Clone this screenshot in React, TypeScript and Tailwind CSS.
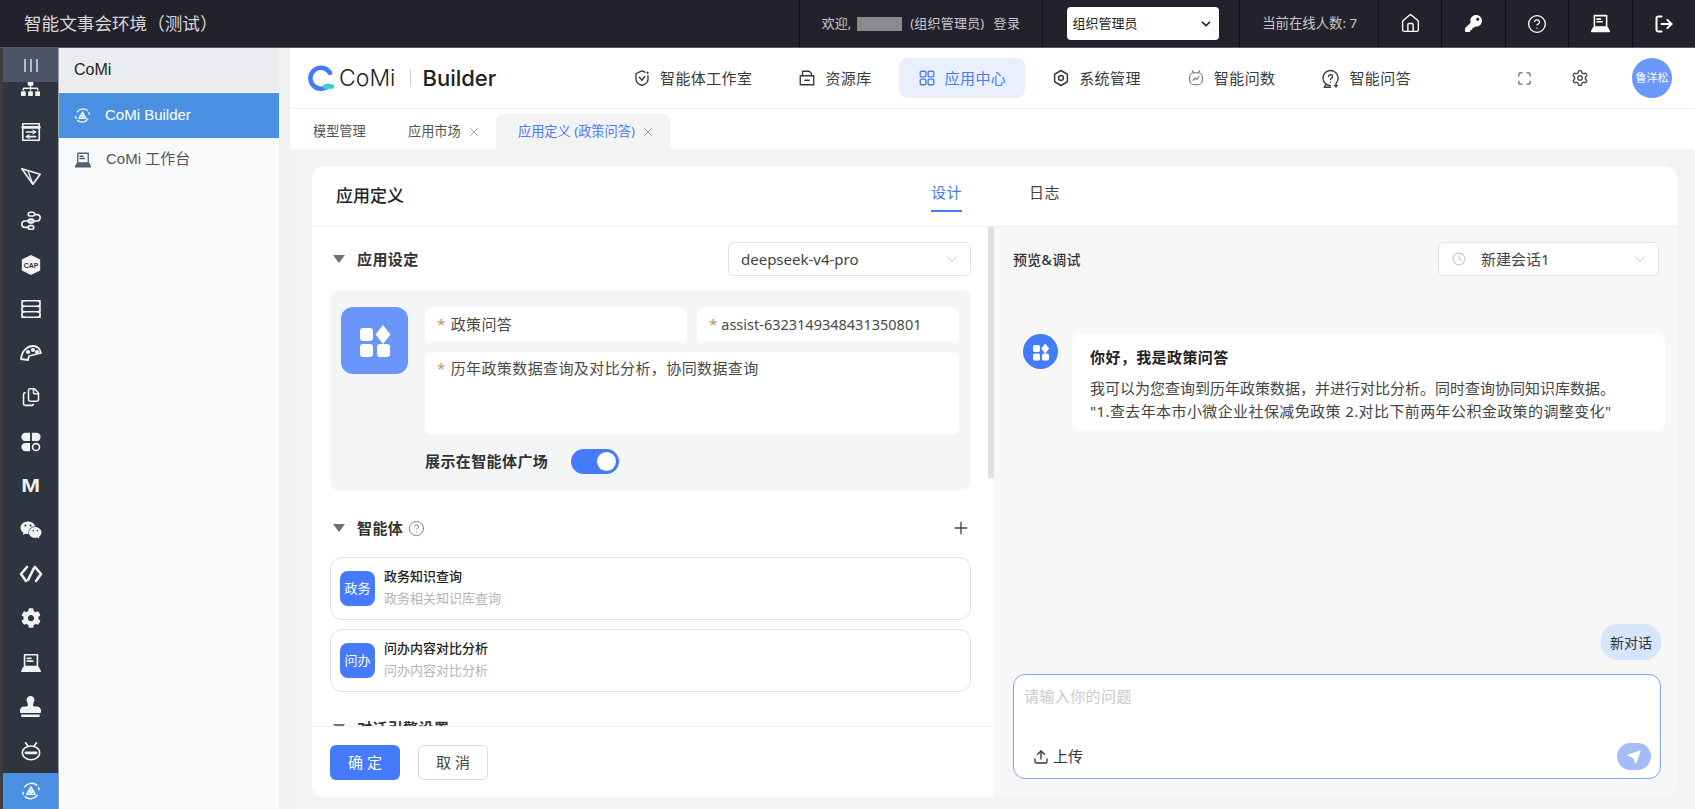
import { ChevronDown, Clock, Maximize, Plus, Settings, Upload, X, House, CircleHelp, LogOut, Send, Files } from 'lucide-react';
import { FaSitemap, FaStamp, FaCog, FaWeixin, FaKey } from 'react-icons/fa';
import type { ReactNode } from 'react';

const cjk = { fontFamily: '"Noto Sans", "Noto Sans CJK SC", sans-serif' };

// small helper for the rail drawings
function Glyph({ size = 22, width = 1.8, children }: { size?: number; width?: number; children: ReactNode }) {
  return (
    <svg width={size} height={size} viewBox="0 0 24 24" fill="none" stroke="currentColor" strokeWidth={width} strokeLinecap="round" strokeLinejoin="round">
      {children}
    </svg>
  );
}

function LaptopIcon({ size = 22 }: { size?: number }) {
  return (
    <Glyph size={size}>
      <path d="M5 3h14v13H5z" />
      <path d="M8 7h4M8 10h6" />
      <path d="M4 17h16l2 4H2z" fill="currentColor" />
    </Glyph>
  );
}

function BuilderIcon({ size = 20 }: { size?: number }) {
  return (
    <Glyph size={size} width={1.7}>
      <path d="M4.5 7a10 10 0 0 1 14.5-2" />
      <path d="M19.5 17a10 10 0 0 1-14.5 2" />
      <path d="M2.2 13.5a10 10 0 0 0 .8 2.5" />
      <path d="M21.8 10.5a10 10 0 0 0-.8-2.5" />
      <path d="M12 7l5 9H7z" />
      <circle cx="12" cy="13" r="1.6" />
    </Glyph>
  );
}

function AppGlyph({ size }: { size: number }) {
  return (
    <svg width={size} height={size} viewBox="0 0 34 34" fill="white">
      <rect x="2" y="4" width="13" height="13" rx="3" />
      <path d="M25 1l7.5 9.5L25 20l-7.5-9.5z" />
      <rect x="2" y="20" width="13" height="13" rx="3" />
      <rect x="19" y="20" width="13" height="13" rx="3" />
    </svg>
  );
}

const railIcons: ReactNode[] = [
  <FaSitemap size={19} />,
  <Glyph><rect x="3" y="3" width="18" height="18" /><path d="M3 7h18" strokeWidth="3" /><path d="M7 12h10M7 17h10" /><path d="M14 10l3 2-3 2M10 15l-3 2 3 2" strokeWidth="1.2" /></Glyph>,
  <Glyph><path d="M2 4l20 6-8 11z" /><path d="M14 21L9 7" strokeWidth="1.4" /></Glyph>,
  <Glyph><rect x="9" y="2.5" width="7" height="4" rx="2" /><path d="M16 5h2.5a3.5 3.5 0 0 1 0 7h-13a3.5 3.5 0 0 0 0 7H9" /><rect x="9" y="17" width="6" height="4" rx="2" /><rect x="9" y="10" width="6" height="4" rx="2" /></Glyph>,
  <svg width="22" height="22" viewBox="0 0 24 24"><path d="M12 1l10 5v12l-10 5-10-5V6z" fill="currentColor" /><text x="12" y="15" textAnchor="middle" fontSize="7.5" fontWeight="700" fill="#2f3441" fontFamily="Liberation Sans, sans-serif">CAP</text></svg>,
  <Glyph><path d="M2 3h20M2 9h20M2 15h20M2 21h20" /><path d="M5 3a3 3 0 0 0 0 6 3 3 0 0 0 0 6 3 3 0 0 0 0 6" /><path d="M19 3a3 3 0 0 1 0 6 3 3 0 0 1 0 6 3 3 0 0 1 0 6" /></Glyph>,
  <Glyph size={24}><path d="M2 18C3 9 9 5 14 5c4 0 7 3 8 7l-12 3-1 4z" /><circle cx="9" cy="11" r="1.2" fill="currentColor" /><circle cx="14" cy="9" r="1.2" fill="currentColor" /><circle cx="18" cy="11" r="1.2" fill="currentColor" /></Glyph>,
  <Files size={20} strokeWidth={1.9} />,
  <svg width="22" height="22" viewBox="0 0 24 24" fill="currentColor"><path d="M6 2h5v9H6a4.5 4.5 0 0 1 0-9zM13 2h5a4.5 4.5 0 0 1 0 9h-5zM6 13h5v9H6a4.5 4.5 0 0 1 0-9z" /><circle cx="17.5" cy="17.5" r="3.8" fill="none" stroke="currentColor" strokeWidth="1.8" /></svg>,
  <span className="text-[18px] leading-none font-black scale-x-125" style={{ fontFamily: '"Liberation Sans", sans-serif' }}>M</span>,
  <FaWeixin size={22} />,
  <Glyph size={24} width={2.6}><path d="M8 5l-6 7 5 7M16 5l6 7-5 7" /><path d="M15 6l-6 12" /></Glyph>,
  <FaCog size={20} />,
  <LaptopIcon />,
  <FaStamp size={21} />,
  <Glyph><path d="M6 3l3 4M18 3l-3 4" /><ellipse cx="12" cy="14" rx="9.5" ry="7.5" /><path d="M6.5 14h11" strokeWidth="3" /></Glyph>,
];

// top nav drawings, thin outlines like the reference
const navStudio = (
  <Glyph size={18}>
    <path d="M20 9v5c0 4-4 6.500-8 8-4-1.500-8-4-8-8V6l8-3.500 4 1.800" />
    <path d="M8.500 11l3.500 4 3.500-5" />
    <path d="M19.500 2.500l.7 1.800 1.800.7-1.800.7-.7 1.800-.7-1.800L17 5l1.800-.7z" fill="currentColor" stroke="none" />
  </Glyph>
);
const navRes = (
  <Glyph size={18}>
    <path d="M3 9h18v12H3z" />
    <path d="M6 9V3h9l3 3v3" />
    <path d="M9 15h6" />
  </Glyph>
);
const navApp = (
  <Glyph size={18}>
    <rect x="3" y="3" width="7.500" height="7.500" rx="1.500" />
    <rect x="13.500" y="3" width="7.500" height="7.500" rx="1.500" />
    <rect x="3" y="13.500" width="7.500" height="7.500" rx="1.500" />
    <rect x="13.500" y="13.500" width="7.500" height="7.500" rx="1.500" />
  </Glyph>
);
const navSys = (
  <Glyph size={18} width={2}>
    <path d="M12 2l8.500 5v10L12 22l-8.500-5V7z" />
    <circle cx="12" cy="12" r="3.200" />
  </Glyph>
);
const navData = (
  <span className="text-[#777]">
    <Glyph size={18} width={1.500}>
      <path d="M7 2l2 3M17 2l-2 3" />
      <rect x="3.500" y="5" width="17" height="16" rx="6" />
      <path d="M8 15l3-3 2 2 3-4" />
    </Glyph>
  </span>
);
const navAsk = (
  <Glyph size={19} width={1.700}>
    <path d="M12 21a9.500 9.500 0 1 1 7-3" />
    <path d="M9.500 9.500a2.500 2.500 0 1 1 3.500 2.300c-.7.400-1 .9-1 1.700" />
    <path d="M12 16.500v.1" />
    <path d="M19 19v4M17 21h4" />
    <path d="M6 20l-2 3h8" />
  </Glyph>
);

function NavItem({ icon, label, active }: { icon: ReactNode; label: string; active?: boolean }) {
  return (
    <div className={`flex items-center gap-[9px] h-10 px-[19px] rounded-lg text-[15px] tracking-[0.4px] ${active ? 'bg-[#e9effc] text-[#4a7cf6]' : 'text-[#3a3a3a]'}`}>
      {icon}
      <span>{label}</span>
    </div>
  );
}

function Field({ children, className }: { children: ReactNode; className: string }) {
  return (
    <div className={`bg-white rounded-md px-3 text-[15px] text-[#4a4a4a] tracking-[0.4px] ${className}`}>
      <span className="text-[#c29a62] mr-[5px]">*</span>
      {children}
    </div>
  );
}

function AgentCard({ badge, title, sub }: { badge: string; title: string; sub: string }) {
  return (
    <div className="h-[63px] rounded-xl border border-[#e2e2e6] bg-white flex items-center pl-[9px] gap-[9px]">
      <div className="w-[35px] h-[35px] rounded-lg bg-[#457bfa] text-white text-[13px] flex items-center justify-center shrink-0">{badge}</div>
      <div className="flex flex-col gap-[5px] pb-[3px]">
        <div className="text-[13px] leading-[17px] font-medium text-[#222]">{title}</div>
        <div className="text-[13px] leading-[17px] text-[#b5b5b5]">{sub}</div>
      </div>
    </div>
  );
}

function SectionTitle({ children }: { children: ReactNode }) {
  return (
    <div className="flex items-center gap-[12px] pl-[3px] text-[15px] font-bold text-[#333] tracking-[0.4px]">
      <span className="w-0 h-0 border-l-[6px] border-r-[6px] border-t-[8px] border-l-transparent border-r-transparent border-t-[#6e7079]" />
      {children}
    </div>
  );
}

export default function App() {
  return (
    <div className="w-[1695px] h-[809px] flex flex-col overflow-hidden bg-[#f3f3f3]" style={cjk}>
      {/* Top bar */}
      <header className="h-12 shrink-0 bg-[#23222c] border-b border-[#5b5b5f] flex items-center text-[#c9c9cc] text-[13px]">
        <div className="w-[800px] pl-6 text-[17.600px] text-[#d8d8d8]">智能文事会环境（测试）</div>
        <div className="w-[244px] h-full border-l border-[#111] flex items-center pl-[22px]">
          <span>欢迎,</span>
          <span className="w-[45px] h-[14px] bg-[#8a8a8d] ml-[6px] mr-[8px]" />
          <span className="tracking-[0.2px]">(组织管理员)</span>
          <span className="ml-[9px] tracking-[0.500px]">登录</span>
        </div>
        <div className="w-[197px] h-full border-l border-[#111] flex items-center pl-[24px]">
          <div className="w-[152px] h-[33px] bg-white rounded-sm flex items-center justify-between px-[5px] text-[#222]">
            组织管理员
            <ChevronDown size={14} strokeWidth={3} className="mr-[1px]" />
          </div>
        </div>
        <div className="w-[139px] h-full border-l border-[#111] flex items-center pl-[22px] text-[13.400px]">当前在线人数: 7</div>
        {[
          <House size={21} strokeWidth={1.6} />,
          <FaKey size={17} />,
          <CircleHelp size={20} strokeWidth={1.6} />,
          <LaptopIcon size={21} />,
          <LogOut size={20} strokeWidth={2.4} />,
        ].map((icon, i) => (
          <div key={i} className="w-[63.500px] h-full border-l border-[#111] flex items-center justify-center text-white">{icon}</div>
        ))}
      </header>

      <div className="flex-1 flex min-h-0">
        <div className="w-[3px] bg-[#3d3d40]" />
        {/* Rail */}
        <aside className="w-[55px] bg-[#2f3441] flex flex-col text-[#f2f2f2] overflow-hidden relative">
          <div className="h-[34px] shrink-0 bg-[#4c5568] flex items-center justify-center gap-[4px] relative z-10">
            <span className="w-[2px] h-[13px] bg-[#b9bcc4]" />
            <span className="w-[2px] h-[13px] bg-[#b9bcc4]" />
            <span className="w-[2px] h-[13px] bg-[#b9bcc4]" />
          </div>
          <div className="-mt-[16px]">
            {railIcons.map((icon, i) => (
              <div key={i} className="h-[44.200px] flex items-center justify-center">{icon}</div>
            ))}
          </div>
          <div className="absolute left-0 right-0 bottom-0 h-[36px] bg-[#4a90e2] flex items-center justify-center text-white">
            <BuilderIcon size={20} />
          </div>
        </aside>

        {/* Sidebar */}
        <aside className="w-[221px] bg-[#f7f9fb] text-[15px] border-l border-[#9aa0a8]">
          <div className="h-[44px] bg-[#ebecef] flex items-center pl-[15px] text-[16px] text-[#222]" style={{ fontFamily: '"Liberation Sans", sans-serif' }}>CoMi</div>
          <div className="h-[45px] mt-[1px] bg-[#4a90e2] text-white flex items-center pl-[15px] gap-[14px]">
            <BuilderIcon size={17} />
            <span style={{ fontFamily: '"Liberation Sans", "Noto Sans CJK SC", sans-serif' }}>CoMi Builder</span>
          </div>
          <div className="h-[43px] text-[#555] flex items-center pl-[15px] gap-[14px]">
            <span className="text-[#4f6175]"><LaptopIcon size={18} /></span>
            <span style={{ fontFamily: '"Liberation Sans", "Noto Sans CJK SC", sans-serif' }}>CoMi 工作台</span>
          </div>
        </aside>

        <div className="w-[11px] bg-[#f1f1f1]" />

        <main className="flex-1 flex flex-col min-w-0">
          {/* App header */}
          <div className="h-[61px] shrink-0 bg-white border-b border-[#efefef] flex items-center pl-[18px]">
            <div className="w-[306px] flex items-center">
              <svg width="26" height="26" viewBox="0 0 26 26" fill="none">
                <path d="M20 21A10.500 10.500 0 1 1 22 8" stroke="#457bfa" strokeWidth="4.500" strokeLinecap="round" />
                <path d="M17 21.500h7" stroke="#35d0c8" strokeWidth="4.500" strokeLinecap="round" />
              </svg>
              <span className="text-[23px] font-light text-[#1f1f1f] ml-[5px]" style={{ fontFamily: 'Inter, sans-serif' }}>CoMi</span>
              <span className="w-px h-[18px] bg-[#cfcfcf] ml-[15px]" />
              <span className="text-[22px] font-medium text-[#222] ml-[11px]" style={{ fontFamily: 'Inter, sans-serif' }}>Builder</span>
            </div>
            <div className="flex items-center gap-[8px]">
              <NavItem icon={navStudio} label="智能体工作室" />
              <NavItem icon={navRes} label="资源库" />
              <NavItem active icon={navApp} label="应用中心" />
              <NavItem icon={navSys} label="系统管理" />
              <NavItem icon={navData} label="智能问数" />
              <NavItem icon={navAsk} label="智能问答" />
            </div>
            <div className="flex-1" />
            <Maximize size={15} className="text-[#666] mr-[39px]" />
            <Settings size={18} className="text-[#555] mr-[43px]" />
            <div className="w-10 h-10 rounded-full bg-[#6a98fb] text-white text-[11px] flex items-center justify-center mr-[23px]">鲁洋松</div>
          </div>

          {/* Tabs */}
          <div className="h-[40px] shrink-0 bg-white flex items-end text-[13.200px] text-[#555]">
            <div className="h-[35px] flex items-center ml-[23px] w-[95px]">模型管理</div>
            <div className="h-[35px] flex items-center gap-[6px] w-[88px]">应用市场 <X size={14} strokeWidth={1.5} className="text-[#999]" /></div>
            <div className="h-[35px] w-[174px] bg-[#f3f3f3] rounded-t-lg text-[#4a7cf6] flex items-center pl-[22px] gap-[6px]">应用定义 (政策问答) <X size={14} strokeWidth={1.5} className="text-[#888]" /></div>
          </div>

          {/* Card */}
          <div className="flex-1 min-h-0 pt-[17px] pl-[22px] pr-[18px] pb-[12px]">
            <div className="h-full bg-white rounded-xl flex flex-col overflow-hidden">
              <div className="h-[61px] shrink-0 border-b border-[#eeeeee] flex items-center pl-[24px] relative">
                <span className="text-[17px] font-medium text-[#222]">应用定义</span>
                <span className="absolute left-[619px] top-[15px] h-[31px] text-[15px] text-[#457bfa] border-b-2 border-[#457bfa] tracking-[0.400px]">设计</span>
                <span className="absolute left-[717px] top-[15px] text-[15px] text-[#444] tracking-[0.400px]">日志</span>
              </div>

              <div className="flex-1 min-h-0 flex">
                {/* Left panel */}
                <div className="w-[682px] flex flex-col relative">
                  <div className="flex-1 min-h-0 overflow-hidden pl-[18px] pr-[23px] pt-[15px]">
                    <div className="flex items-center justify-between h-[34px]">
                      <SectionTitle>应用设定</SectionTitle>
                      <div className="w-[243px] h-[34px] rounded-md border border-[#e2e2e6] flex items-center justify-between pl-[12px] pr-[9px] text-[15px] text-[#444]">
                        deepseek-v4-pro
                        <ChevronDown size={18} strokeWidth={1.2} className="text-[#bdbdbd]" />
                      </div>
                    </div>

                    <div className="mt-[14px] h-[200px] rounded-lg bg-[#f4f5f7] flex pt-[17px] pl-[11px] pr-[12px] gap-[17px]">
                      <div className="w-[67px] h-[67px] rounded-xl bg-[#6a95fb] flex items-center justify-center shrink-0">
                        <AppGlyph size={34} />
                      </div>
                      <div className="flex-1">
                        <div className="flex gap-[10px]">
                          <Field className="w-[262px] h-[35px] flex items-center">政策问答</Field>
                          <div className="w-[262px] h-[35px] flex items-center bg-white rounded-md px-3 text-[14.500px] text-[#4a4a4a]">
                            <span className="text-[#c29a62] text-[15px] mr-[4px]">*</span>
                            assist-6323149348431350801
                          </div>
                        </div>
                        <Field className="h-[83px] mt-[10px] pt-[5px]">历年政策数据查询及对比分析，协同数据查询</Field>
                        <div className="mt-[14px] h-[25px] flex items-center">
                          <span className="w-[146px] text-[15px] font-bold text-[#333] tracking-[0.400px]">展示在智能体广场</span>
                          <div className="w-[48px] h-[25px] rounded-full bg-[#457bfa] flex items-center justify-end pr-[3px]">
                            <span className="w-[19px] h-[19px] rounded-full bg-white" />
                          </div>
                        </div>
                      </div>
                    </div>

                    <div className="mt-[26px] h-[24px] flex items-center justify-between">
                      <div className="flex items-center gap-[5px]">
                        <SectionTitle>智能体</SectionTitle>
                        <CircleHelp size={17} strokeWidth={1.3} className="text-[#777]" />
                      </div>
                      <Plus size={20} strokeWidth={1.6} className="text-[#444]" />
                    </div>

                    <div className="mt-[17px] flex flex-col gap-[9px]">
                      <AgentCard badge="政务" title="政务知识查询" sub="政务相关知识库查询" />
                      <AgentCard badge="问办" title="问办内容对比分析" sub="问办内容对比分析" />
                    </div>

                    <div className="mt-[25px]">
                      <SectionTitle>对话引擎设置</SectionTitle>
                    </div>
                  </div>
                  <div className="absolute right-0 top-0 w-[6px] h-[251px] bg-[#dfe0e3]" />
                  <div className="h-[71px] shrink-0 border-t border-[#f0f0f0] flex items-center pl-[18px] gap-[18px] bg-white">
                    <div className="w-[70px] h-[35px] pl-[4px] rounded-md bg-[#457bfa] text-white text-[15px] tracking-[4px] flex items-center justify-center">确定</div>
                    <div className="w-[70px] h-[35px] pl-[4px] rounded-md border border-[#dcdcdc] text-[#444] text-[15px] tracking-[4px] flex items-center justify-center">取消</div>
                  </div>
                </div>

                {/* Right panel */}
                <div className="flex-1 bg-[#f7f7f7] flex flex-col pl-[19px] pr-[18px]">
                  <div className="flex items-center justify-between mt-[15px] h-[34px]">
                    <span className="text-[14px] font-medium text-[#333] tracking-[0.300px]">预览&调试</span>
                    <div className="w-[221px] h-[34px] rounded-md border border-[#e2e2e6] bg-white flex items-center pl-[13px] pr-[9px] text-[15px] text-[#444]">
                      <Clock size={14} className="text-[#c9c9c9] mr-[15px]" />
                      <span className="flex-1">新建会话1</span>
                      <ChevronDown size={18} strokeWidth={1.2} className="text-[#bdbdbd]" />
                    </div>
                  </div>

                  <div className="flex mt-[58px] -mr-[6px] pl-[10px] gap-[14px]">
                    <div className="w-[35px] h-[35px] rounded-full bg-[#457bfa] flex items-center justify-center shrink-0">
                      <AppGlyph size={18} />
                    </div>
                    <div className="flex-1 h-[97px] bg-white rounded-lg pl-[18px] pt-[12px]">
                      <div className="text-[15px] leading-[22px] font-bold text-[#222] tracking-[0.400px]">你好，我是政策问答</div>
                      <div className="text-[15px] leading-[23px] text-[#444] mt-[9px]">我可以为您查询到历年政策数据，并进行对比分析。同时查询协同知识库数据。</div>
                      <div className="text-[15px] leading-[23px] text-[#444] tracking-[0.400px]">"1.查去年本市小微企业社保减免政策 2.对比下前两年公积金政策的调整变化"</div>
                    </div>
                  </div>

                  <div className="flex-1" />
                  <div className="self-end -mr-[2px] w-[60px] h-[36px] rounded-2xl bg-[#d8e6fd] text-[14px] text-[#333] flex items-center justify-center">新对话</div>
                  <div className="mt-[14px] mb-[18px] -mr-[2px] h-[105px] rounded-xl border-[1.500px] border-[#7fa3fb] bg-white flex flex-col pl-[10px] pr-[9px] pt-[10px]">
                    <div className="text-[15px] text-[#c9c9c9] tracking-[0.400px]">请输入你的问题</div>
                    <div className="flex-1" />
                    <div className="flex items-center justify-between pb-[8px] pl-[9px]">
                      <div className="flex items-center gap-[4px] text-[15px] text-[#333]">
                        <Upload size={16} />
                        上传
                      </div>
                      <div className="w-[34px] h-[27px] rounded-full bg-[#a3bdf9] flex items-center justify-center">
                        <Send size={14} className="text-white" fill="white" />
                      </div>
                    </div>
                  </div>
                </div>
              </div>
            </div>
          </div>
        </main>
      </div>
    </div>
  );
}
